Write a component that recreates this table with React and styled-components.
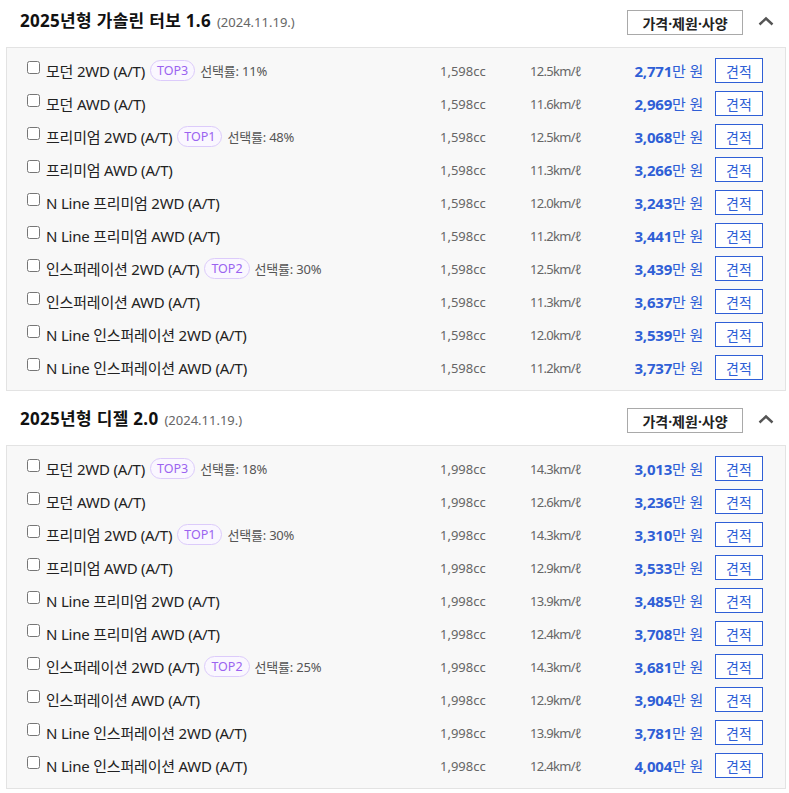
import React from 'react';
import styled, { createGlobalStyle } from 'styled-components';

const GlobalStyle = createGlobalStyle`
    body {
        margin: 0;
        background: #fff;
        font-family: "Noto Sans", "Noto Sans CJK KR", sans-serif;
        color: #222;
    }
`;

const Page = styled.div`
    width: 789px;
    padding: 0 3px 0 6px;
    box-sizing: border-box;
`;

const Section = styled.section`
    & + & {
        margin-top: 7px;
    }
`;

const Header = styled.div`
    height: 47px;
    display: flex;
    align-items: center;
    padding: 0 8px 0 14px;
    box-sizing: border-box;
`;

const Title = styled.h2`
    flex: 1;
    margin: 0 0 9px;
    font-size: 17px;
    font-weight: 700;
    color: #111;
    letter-spacing: 0.3px;
    font-family: "Noto Sans", "Noto Sans CJK KR", sans-serif;
`;

const DateText = styled.span`
    margin-left: 6px;
    font-size: 13px;
    font-weight: 400;
    color: #666;
    letter-spacing: 0;
`;

const SpecButton = styled.button`
    height: 25px;
    width: 116px;
    margin-top: -2px;
    border: 1px solid #a9a9a9;
    background: #fff;
    font-family: "Noto Sans", "Noto Sans CJK KR", sans-serif;
    font-size: 14px;
    font-weight: 700;
    color: #222;
    padding: 0;
    cursor: pointer;
`;

const Toggle = styled.button`
    width: 24px;
    height: 20px;
    margin: -6px 0 0 11px;
    border: none;
    background: none;
    padding: 0;
    display: flex;
    align-items: center;
    justify-content: center;
`;

const Panel = styled.div`
    border: 1px solid #e3e3e3;
    background: #f8f8f8;
    padding: 6px 22px 6px 20px;
`;

const Row = styled.div`
    height: 33px;
    display: grid;
    grid-template-columns: 1fr 90px 70px 103px 60px;
    align-items: center;
    font-size: 13px;
`;

const Name = styled.label`
    display: flex;
    align-items: center;
    font-size: 15px;
    color: #222;
    white-space: nowrap;
    letter-spacing: -0.2px;
`;

const Check = styled.input`
    width: 13px;
    height: 13px;
    margin: -6px 6px 0 0;
`;

const Tag = styled.span`
    margin-left: 5px;
    height: 21px;
    padding: 0 6px;
    border: 1px solid #dccbfb;
    border-radius: 11px;
    background: #faf7ff;
    color: #9b63f0;
    font-size: 12.5px;
    letter-spacing: 0;
    display: inline-flex;
    align-items: center;
    box-sizing: border-box;
`;

const Rate = styled.span`
    margin-left: 5px;
    font-size: 13px;
    color: #555;
    letter-spacing: -0.2px;
`;

const Spec = styled.span`
    color: #666;
    font-size: 13px;
    letter-spacing: ${p => (p.tight ? '-0.7px' : '0')};
`;

const Price = styled.span`
    text-align: right;
    color: #2f5fd6;
    font-size: 15px;
    font-family: "Noto Sans", "Noto Sans CJK KR", sans-serif;
    letter-spacing: -0.2px;

    b {
        font-weight: 700;
    }
`;

const QuoteButton = styled.button`
    justify-self: end;
    width: 48px;
    height: 25px;
    border: 1px solid #2f5fd6;
    background: #fff;
    color: #2f5fd6;
    font-family: "Noto Sans CJK KR", sans-serif;
    font-size: 14px;
    padding: 0;
    cursor: pointer;
`;

const trims = [
    '모던 2WD (A/T)',
    '모던 AWD (A/T)',
    '프리미엄 2WD (A/T)',
    '프리미엄 AWD (A/T)',
    'N Line 프리미엄 2WD (A/T)',
    'N Line 프리미엄 AWD (A/T)',
    '인스퍼레이션 2WD (A/T)',
    '인스퍼레이션 AWD (A/T)',
    'N Line 인스퍼레이션 2WD (A/T)',
    'N Line 인스퍼레이션 AWD (A/T)',
];

const sections = [
    {
        title: '2025년형 가솔린 터보 1.6',
        date: '(2024.11.19.)',
        cc: '1,598cc',
        eff: ['12.5', '11.6', '12.5', '11.3', '12.0', '11.2', '12.5', '11.3', '12.0', '11.2'],
        prices: ['2,771', '2,969', '3,068', '3,266', '3,243', '3,441', '3,439', '3,637', '3,539', '3,737'],
        tags: { 0: ['TOP3', '11%'], 2: ['TOP1', '48%'], 6: ['TOP2', '30%'] },
    },
    {
        title: '2025년형 디젤 2.0',
        date: '(2024.11.19.)',
        cc: '1,998cc',
        eff: ['14.3', '12.6', '14.3', '12.9', '13.9', '12.4', '14.3', '12.9', '13.9', '12.4'],
        prices: ['3,013', '3,236', '3,310', '3,533', '3,485', '3,708', '3,681', '3,904', '3,781', '4,004'],
        tags: { 0: ['TOP3', '18%'], 2: ['TOP1', '30%'], 6: ['TOP2', '25%'] },
    },
];

const Chevron = () => (
    <svg width="16" height="10" viewBox="0 0 16 10">
        <polyline points="1.5,8.5 8,2.5 14.5,8.5" fill="none" stroke="#555" strokeWidth="2.4" />
    </svg>
);

const App = () => (
    <Page>
        <GlobalStyle />
        {sections.map(sec => (
            <Section key={sec.title}>
                <Header>
                    <Title>
                        {sec.title}
                        <DateText>{sec.date}</DateText>
                    </Title>
                    <SpecButton>가격·제원·사양</SpecButton>
                    <Toggle aria-label="접기"><Chevron /></Toggle>
                </Header>
                <Panel>
                    {trims.map((trim, i) => (
                        <Row key={trim}>
                            <Name>
                                <Check type="checkbox" />
                                {trim}
                                {sec.tags[i] && (
                                    <>
                                        <Tag>{sec.tags[i][0]}</Tag>
                                        <Rate>선택률: {sec.tags[i][1]}</Rate>
                                    </>
                                )}
                            </Name>
                            <Spec>{sec.cc}</Spec>
                            <Spec tight>{sec.eff[i]}km/ℓ</Spec>
                            <Price><b>{sec.prices[i]}</b>만 원</Price>
                            <QuoteButton>견적</QuoteButton>
                        </Row>
                    ))}
                </Panel>
            </Section>
        ))}
    </Page>
);

export default App;
